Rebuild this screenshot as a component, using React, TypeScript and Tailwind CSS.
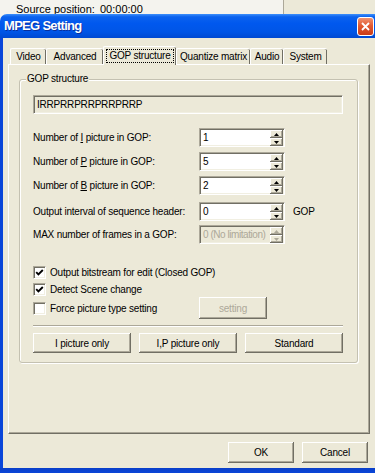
import React from 'react';

const raised =
  'bg-[#ece9d8] shadow-[inset_-1px_-1px_0_#716f64,inset_1px_1px_0_#ffffff,inset_-2px_-2px_0_#aca899]';
const sunken =
  'border border-t-[#aca899] border-l-[#aca899] border-b-white border-r-white shadow-[inset_1px_1px_0_#716f64,inset_-1px_-1px_0_#f1efe2]';

function Arrow({ up, color }: { up: boolean; color: string }) {
  return (
    <svg width="5" height="3" viewBox="0 0 5 3">
      <path d={up ? 'M2.5 0L5 3H0Z' : 'M0 0H5L2.5 3Z'} fill={color} />
    </svg>
  );
}

function Spin({ value, disabled }: { value: string; disabled?: boolean }) {
  const c = disabled ? '#aca899' : '#000000';
  return (
    <div
      className={`flex h-[19px] w-[86px] shrink-0 ${disabled ? 'bg-[#ece9d8]' : 'bg-white'} ${sunken}`}
    >
      <div
        className={`flex-1 overflow-hidden whitespace-nowrap pl-[3px] leading-[17px] ${disabled ? 'tracking-[-0.45px] text-[#aca899]' : 'text-black'}`}
      >
        {value}
      </div>
      <div className="mt-[1px] mr-[1px] flex h-[16px] w-[13px] shrink-0 flex-col">
        <div className={`flex flex-1 items-center justify-center ${raised}`}>
          <Arrow up color={c} />
        </div>
        <div className={`flex flex-1 items-center justify-center ${raised}`}>
          <Arrow up={false} color={c} />
        </div>
      </div>
    </div>
  );
}

function Check({ checked }: { checked?: boolean }) {
  return (
    <div className={`flex h-[13px] w-[13px] shrink-0 items-center justify-center bg-white ${sunken}`}>
      {checked && (
        <svg width="9" height="9" viewBox="0 0 9 9">
          <path d="M1.2 4.2L3.4 6.4L7.8 2" stroke="#000" strokeWidth="1.9" fill="none" />
        </svg>
      )}
    </div>
  );
}

function Btn({
  children,
  w,
  h,
  disabled,
}: {
  children: React.ReactNode;
  w: string;
  h: string;
  disabled?: boolean;
}) {
  return (
    <div
      className={`flex items-center justify-center ${w} ${h} ${raised} ${disabled ? 'text-[#aca899]' : 'text-black'}`}
    >
      {children}
    </div>
  );
}

function Tab({ label, w }: { label: string; w: string }) {
  return (
    <div
      className={`flex h-[16px] ${w} items-center justify-center rounded-t-[2px] border-t border-l border-t-white border-l-white shadow-[inset_-1px_0_0_#716f64]`}
    >
      {label}
    </div>
  );
}

function Row({ label, children }: { label: React.ReactNode; children: React.ReactNode }) {
  return (
    <div className="flex h-[19px] items-center">
      <div className="w-[166px] shrink-0">{label}</div>
      {children}
    </div>
  );
}

export default function App() {
  return (
    <div className="flex h-[473px] w-[375px] flex-col overflow-hidden bg-[#f4f3ee] text-[10px] tracking-[-0.2px] text-black [font-family:'Liberation_Sans',Arial,sans-serif]">
      {/* background window strip */}
      <div className="flex h-[14px] shrink-0 overflow-hidden">
        <div className="flex w-[283px] pt-[3px] text-[11px] leading-[12px] tracking-normal">
          <span className="ml-[16px] w-[84px]">Source position:</span>
          <span>00:00:00</span>
        </div>
        <div className="flex-1 border-l border-l-[#aca899] bg-[#ece9d8]" />
      </div>

      {/* dialog */}
      <div className="flex flex-1 flex-col">
        {/* title bar */}
        <div className="flex h-[24px] shrink-0 items-center rounded-tl-[7px] bg-[linear-gradient(180deg,#3d8ffb_0%,#0b62ee_12%,#0058ee_40%,#0055e6_75%,#0049d2_100%)]">
          <span className="ml-[4px] text-[13px] font-bold tracking-[-0.7px] text-white [text-shadow:1px_1px_0_#0a2f9a]">
            MPEG Setting
          </span>
          <div className="mr-[1px] ml-auto flex h-[19px] w-[17px] items-center justify-center rounded-[3px] border border-white bg-[linear-gradient(180deg,#f09270_0%,#e25a32_45%,#c93b18_100%)]">
            <svg width="9" height="9" viewBox="0 0 9 9">
              <path d="M1 1L8 8M8 1L1 8" stroke="#fff" strokeWidth="1.8" />
            </svg>
          </div>
        </div>

        {/* body */}
        <div className="flex flex-1 flex-col border-l-[3px] border-l-[#0a46d9] bg-[#ece9d8]">
          {/* tabs */}
          <div className="relative z-10 mt-[8px] ml-[7px] flex h-[18px] items-end">
            <Tab label="Video" w="w-[36px]" />
            <Tab label="Advanced" w="w-[57px]" />
            <div className="mb-[-1px] flex h-[19px] w-[73px] items-start justify-center rounded-t-[2px] border-t border-l border-t-white border-l-white bg-[#ece9d8] pt-[2px] shadow-[inset_-1px_0_0_#716f64]">
              <span className="border border-dotted border-black px-[2px] leading-[12px]">
                GOP structure
              </span>
            </div>
            <Tab label="Quantize matrix" w="w-[74px]" />
            <Tab label="Audio" w="w-[33px]" />
            <Tab label="System" w="w-[44px]" />
          </div>

          {/* panel */}
          <div className="ml-[5px] h-[370px] w-[362px] border border-t-white border-l-white border-r-[#716f64] border-b-[#716f64] shadow-[inset_-1px_-1px_0_#aca899]">
            <div className="relative mt-[14px] ml-[10px] h-[284px] w-[339px] rounded-[3px] border border-[#c4c1b1] shadow-[inset_1px_1px_0_#ffffff,1px_1px_0_#ffffff]">
              <div className="absolute top-[-7px] left-[6px] bg-[#ece9d8] px-[1px] leading-[12px]">
                GOP structure
              </div>
              <div className="flex flex-col pt-[15px] pl-[13px]">
                <div className={`h-[19px] w-[310px] bg-[#ece9d8] pl-[3px] leading-[17px] ${sunken}`}>
                  IRRPRRPRRPRRPRRP
                </div>

                <div className="mt-[14px]">
                  <Row
                    label={
                      <>
                        Number of <span className="underline">I</span> picture in GOP:
                      </>
                    }
                  >
                    <Spin value="1" />
                  </Row>
                </div>
                <div className="mt-[5px]">
                  <Row
                    label={
                      <>
                        Number of <span className="underline">P</span> picture in GOP:
                      </>
                    }
                  >
                    <Spin value="5" />
                  </Row>
                </div>
                <div className="mt-[5px]">
                  <Row
                    label={
                      <>
                        Number of <span className="underline">B</span> picture in GOP:
                      </>
                    }
                  >
                    <Spin value="2" />
                  </Row>
                </div>
                <div className="mt-[7px]">
                  <Row label="Output interval of sequence header:">
                    <Spin value="0" />
                    <span className="ml-[8px]">GOP</span>
                  </Row>
                </div>
                <div className="mt-[4px]">
                  <Row label="MAX number of frames in a GOP:">
                    <Spin value="0 (No limitation)" disabled />
                  </Row>
                </div>

                <div className="mt-[19px] flex h-[18px] items-center">
                  <Check checked />
                  <span className="ml-[4px]">Output bitstream for edit (Closed GOP)</span>
                </div>
                <div className="flex h-[16px] items-center">
                  <Check checked />
                  <span className="ml-[4px]">Detect Scene change</span>
                </div>
                <div className="flex h-[22px] items-center">
                  <Check />
                  <span className="ml-[4px] w-[149px]">Force picture type setting</span>
                  <Btn w="w-[68px]" h="h-[22px]" disabled>
                    setting
                  </Btn>
                </div>

                <div className="mt-[6px] h-[2px] w-[310px] border-t border-t-[#aca899] border-b border-b-white" />

                <div className="mt-[6px] flex gap-[8px]">
                  <Btn w="w-[98px]" h="h-[20px]">
                    I picture only
                  </Btn>
                  <Btn w="w-[98px]" h="h-[20px]">
                    I,P picture only
                  </Btn>
                  <Btn w="w-[98px]" h="h-[20px]">
                    Standard
                  </Btn>
                </div>
              </div>
            </div>
          </div>

          {/* OK / Cancel */}
          <div className="mt-[8px] mr-[7px] flex justify-end gap-[8px]">
            <Btn w="w-[66px]" h="h-[21px]">
              OK
            </Btn>
            <Btn w="w-[66px]" h="h-[21px]">
              Cancel
            </Btn>
          </div>
        </div>

        <div className="h-[5px] shrink-0 bg-[linear-gradient(180deg,#0a3fc8,#0a46d9)]" />
      </div>
    </div>
  );
}
